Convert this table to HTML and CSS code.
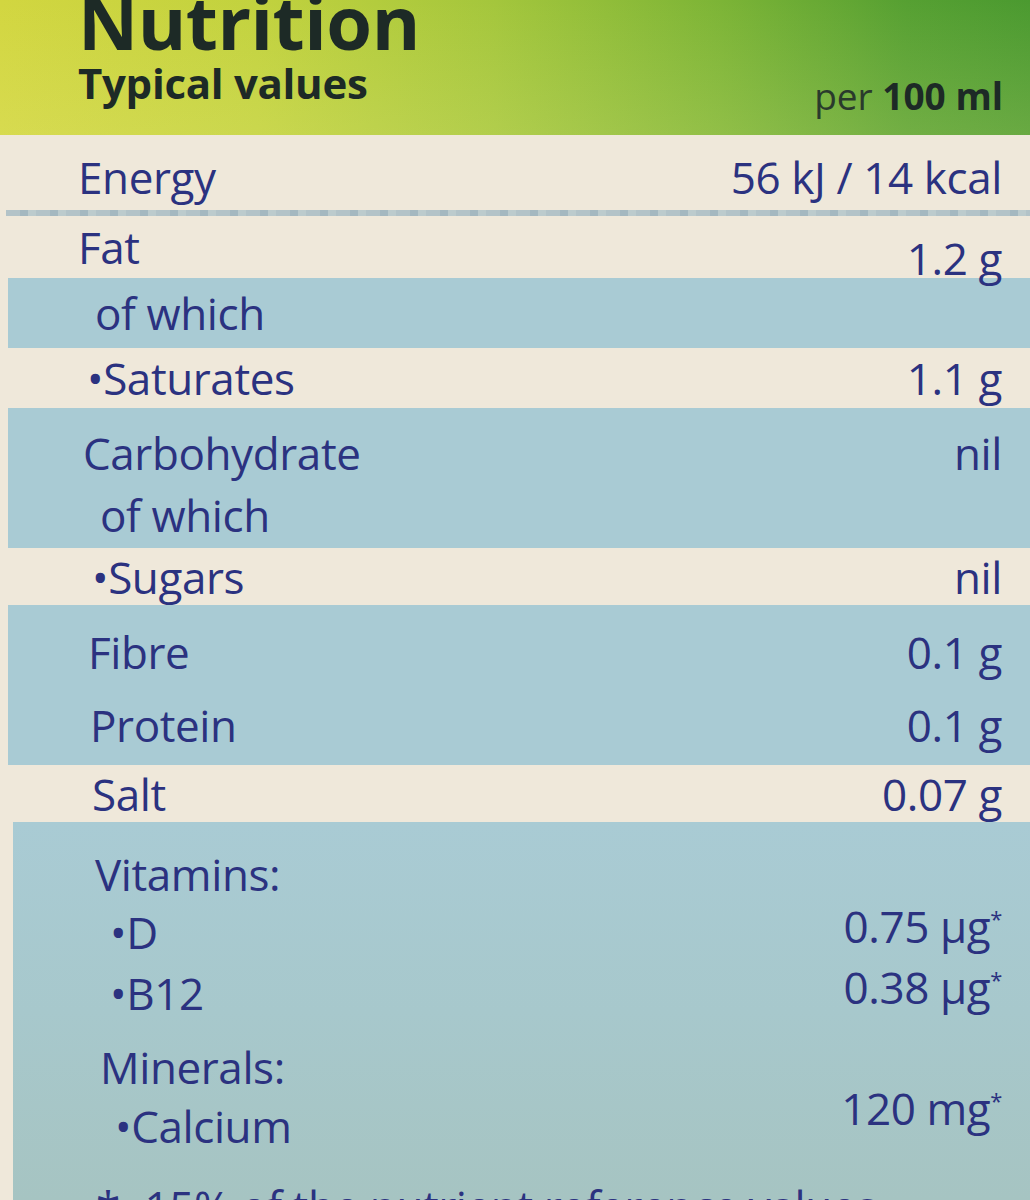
FILE: index.html
```html
<!DOCTYPE html>
<html lang="en">
<head>
<meta charset="utf-8">
<title>Nutrition</title>
<link rel="stylesheet" href="styles.css">
</head>
<body>
<div class="label">
  <header class="head">
    <h1 class="title">Nutrition</h1>
    <div class="sub">
      <span class="typical">Typical values</span>
      <span class="per">per <b>100 ml</b></span>
    </div>
  </header>

  <section class="band cream energy-band">
    <div class="row r-energy"><span>Energy</span><span>56 kJ / 14 kcal</span></div>
  </section>
  <div class="rule"></div>

  <section class="band cream">
    <div class="row r-fat"><span>Fat</span><span class="v-low">1.2 g</span></div>
  </section>
  <section class="band blue">
    <div class="row r-ofwhich1"><span>of which</span></div>
  </section>
  <section class="band cream">
    <div class="row r-sat"><span>•Saturates</span><span>1.1 g</span></div>
  </section>
  <section class="band blue">
    <div class="row r-carb"><span>Carbohydrate</span><span>nil</span></div>
    <div class="row r-ofwhich2"><span>of which</span></div>
  </section>
  <section class="band cream">
    <div class="row r-sugars"><span>•Sugars</span><span>nil</span></div>
  </section>
  <section class="band blue">
    <div class="row r-fibre"><span>Fibre</span><span>0.1 g</span></div>
    <div class="row r-protein"><span>Protein</span><span>0.1 g</span></div>
  </section>
  <section class="band cream">
    <div class="row r-salt"><span>Salt</span><span>0.07 g</span></div>
  </section>
  <section class="band blue last">
    <div class="row r-vit"><span>Vitamins:</span></div>
    <div class="row r-d"><span>•D</span><span class="v-up">0.75 µg<sup>*</sup></span></div>
    <div class="row r-b12"><span>•B12</span><span class="v-up">0.38 µg<sup>*</sup></span></div>
    <div class="row r-min"><span>Minerals:</span></div>
    <div class="row r-cal"><span>•Calcium</span><span class="v-up2">120 mg<sup>*</sup></span></div>
    <p class="note">*=15% of the nutrient reference values</p>
  </section>
</div>
</body>
</html>
```

FILE: styles.css
```css
html, body {
  margin: 0;
  padding: 0;
}
body {
  width: 1030px;
  height: 1200px;
  overflow: hidden;
  background: #efe8da;
  font-family: "Open Sans", "Liberation Sans", sans-serif;
}
.label {
  width: 1030px;
}
.head {
  display: flow-root;
  height: 135px;
  box-sizing: border-box;
  padding: 0 27px 0 78px;
  background:
    linear-gradient(180deg, rgba(255,255,220,0) 0%, rgba(240,240,150,0.18) 100%),
    linear-gradient(90deg, #d2d640 0%, #c2d23e 25%, #a4c63c 48%, #7cb436 70%, #56a032 88%, #4b9a30 100%);
  color: #1d2a26;
}
.title {
  margin: -15px 0 0 0;
  font-size: 74px;
  font-weight: 700;
  line-height: 74px;
  letter-spacing: -0.5px;
}
.sub {
  display: flex;
  justify-content: space-between;
  align-items: flex-start;
  margin-top: 2px;
}
.typical {
  font-size: 42px;
  font-weight: 700;
  line-height: 44px;
  letter-spacing: -0.3px;
}
.per {
  font-size: 37px;
  line-height: 44px;
  margin-top: 13px;
  color: #2a3a2c;
}
.per b {
  font-weight: 700;
  color: #1d2a26;
}

.band {
  color: #2b3280;
  font-size: 44px;
}
.cream {
  background: #efe8da;
}
.blue {
  background: #a9cbd4;
  margin-left: 8px;
}
.last {
  background: linear-gradient(180deg, #a9cbd4 0%, #a7c8cc 50%, #a6c4c2 100%);
  height: 378px;
  overflow: hidden;
  margin-left: 13px;
}
.rule {
  height: 6px;
  margin: 0 0 0 6px;
  background: repeating-linear-gradient(90deg, #b3c3c8 0 14px, #a4b8c0 14px 22px, #bccbcd 22px 30px);
}
.row {
  display: flex;
  justify-content: space-between;
  align-items: center;
  padding-right: 28px;
  letter-spacing: -0.4px;
}
.row span {
  white-space: nowrap;
}
sup {
  font-size: 22px;
  vertical-align: 0;
  position: relative;
  top: -16px;
}

.r-energy { height: 75px; padding-left: 78px; padding-top: 8px; box-sizing: border-box; }
.r-fat { height: 62px; padding-left: 78px; }
.v-low { padding-top: 22px; }
.r-ofwhich1 { height: 70px; padding-left: 87px; }
.r-sat { height: 60px; padding-left: 87px; }
.r-carb { height: 80px; padding-left: 75px; padding-top: 10px; box-sizing: border-box; }
.r-ofwhich2 { height: 60px; padding-left: 92px; padding-bottom: 6px; box-sizing: border-box; }
.r-sugars { height: 57px; padding-left: 92px; }
.r-fibre { height: 84px; padding-left: 80px; padding-top: 10px; box-sizing: border-box; }
.r-protein { height: 76px; padding-left: 82px; padding-bottom: 4px; box-sizing: border-box; }
.r-salt { height: 57px; padding-left: 92px; }
.r-vit { height: 56px; margin-top: 24px; padding-left: 82px; }
.r-d { height: 60px; padding-left: 97px; }
.r-b12 { height: 62px; padding-left: 97px; }
.r-min { height: 72px; padding-left: 87px; padding-top: 14px; box-sizing: border-box; }
.r-cal { height: 60px; padding-left: 102px; }
.v-up { padding-bottom: 12px; }
.v-up2 { padding-bottom: 36px; }
.note {
  margin: 20px 0 0 83px;
  font-size: 44px;
  line-height: 60px;
  color: #2b3280;
  white-space: nowrap;
  letter-spacing: -0.4px;
}
```
